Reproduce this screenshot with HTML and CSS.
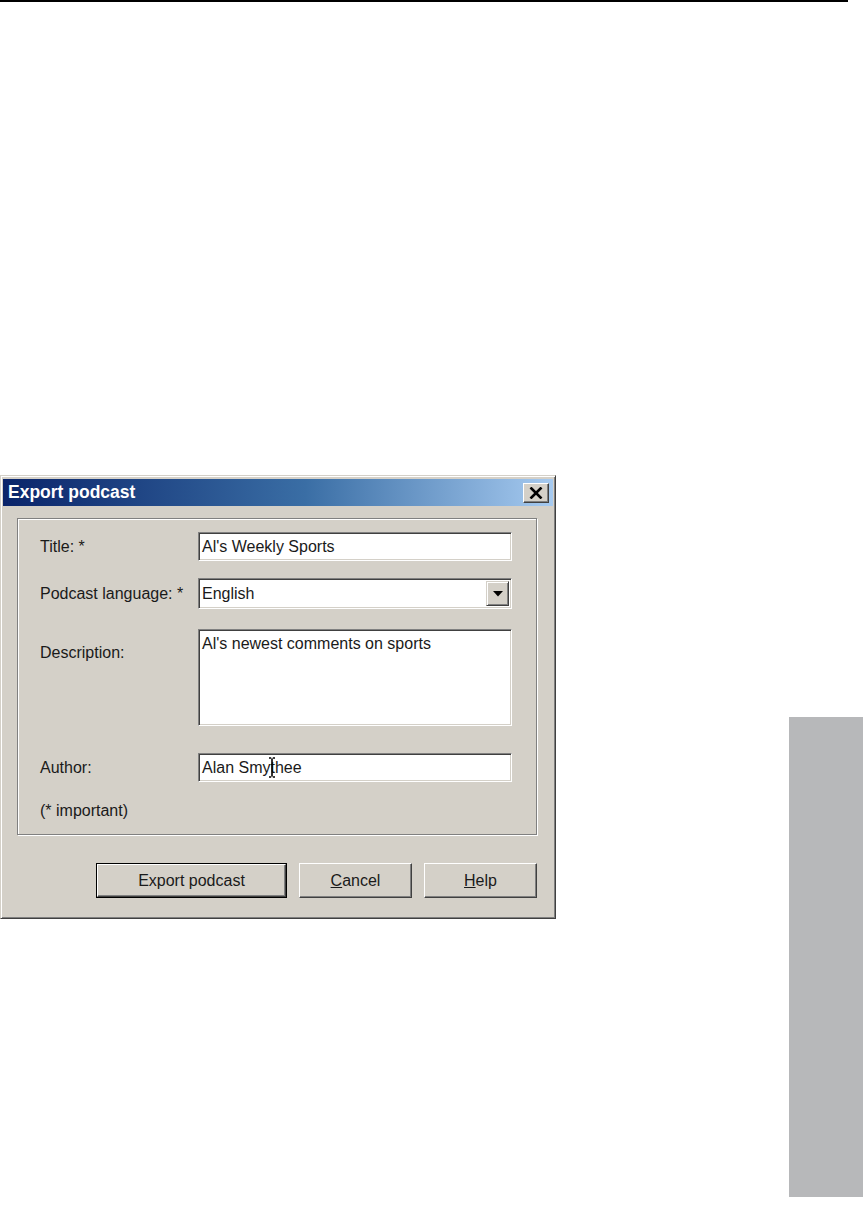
FILE: index.html
```html
<!DOCTYPE html>
<html lang="en">
<head>
    <meta charset="UTF-8">
    <title>Export podcast</title>
    <link rel="stylesheet" href="styles.css">
</head>
<body>
    <div class="rule"></div>

    <div class="page">
        <div class="main">
            <div class="dialog">
                <div class="titlebar">
                    <span class="title">Export podcast</span>
                    <span class="close-btn">
                        <svg width="14" height="12" viewBox="0 0 14 12">
                            <path d="M1.5 0.5 L12.5 11.5 M12.5 0.5 L1.5 11.5" stroke="#000" stroke-width="2.6"/>
                        </svg>
                    </span>
                </div>

                <div class="dialog-body">
                    <div class="group">
                        <div class="row row-title">
                            <span class="label">Title: *</span>
                            <div class="field">Al's Weekly Sports</div>
                        </div>

                        <div class="row row-lang">
                            <span class="label">Podcast language: *</span>
                            <div class="field select">
                                <span class="select-value">English</span>
                                <span class="drop-btn">
                                    <svg width="10" height="6" viewBox="0 0 10 6">
                                        <path d="M0 0 H10 L5 5.5 Z" fill="#000"/>
                                    </svg>
                                </span>
                            </div>
                        </div>

                        <div class="row row-desc">
                            <span class="label">Description:</span>
                            <div class="field textarea">Al's newest comments on sports</div>
                        </div>

                        <div class="row row-author">
                            <span class="label">Author:</span>
                            <div class="field">Alan Smy<span class="ibeam"><svg width="6" height="21" viewBox="0 0 6 21"><path d="M0 1 H2.2 M3.8 1 H6 M3 1.5 V19.5 M0 20 H2.2 M3.8 20 H6" stroke="#000" stroke-width="1.6"/></svg></span>thee</div>
                        </div>

                        <div class="note">(* important)</div>
                    </div>

                    <div class="buttons">
                        <div class="default-ring"><button class="btn btn-wide">Export podcast</button></div>
                        <button class="btn"><u>C</u>ancel</button>
                        <button class="btn"><u>H</u>elp</button>
                    </div>
                </div>
            </div>
        </div>

        <div class="side-tab"></div>
    </div>
</body>
</html>
```

FILE: styles.css
```css
body {
    margin: 0;
    background-color: #fff;
    font-family: "Liberation Sans", Arial, sans-serif;
    color: #1a1a1a;
}

.rule {
    width: 848px;
    height: 2px;
    background-color: #000;
}

.page {
    display: flex;
    align-items: flex-start;
}

.main {
    flex: 1;
}

.side-tab {
    flex: none;
    width: 74px;
    height: 480px;
    margin-top: 715px;
    background-color: #b7b8ba;
}

/* Dialog window */
.dialog {
    box-sizing: border-box;
    width: 556px;
    height: 444px;
    margin-top: 473px;
    padding: 3px 2px;
    background-color: #d4d0c8;
    border: 1px solid;
    border-color: #d4d0c8 #404040 #404040 #d4d0c8;
    box-shadow: inset 1px 1px 0 #fff, inset -1px -1px 0 #808080;
}

.titlebar {
    display: flex;
    align-items: center;
    justify-content: space-between;
    height: 27px;
    padding: 0 4px 0 5px;
    background: linear-gradient(to right, #0a246a 0%, #3a6ea5 55%, #a6caf0 100%);
}

.title {
    color: #fff;
    font-weight: bold;
    font-size: 17.5px;
}

.close-btn {
    box-sizing: border-box;
    display: flex;
    align-items: center;
    justify-content: center;
    width: 26px;
    height: 20px;
    background-color: #d4d0c8;
    border: 1px solid;
    border-color: #fff #404040 #404040 #fff;
    box-shadow: inset -1px -1px 0 #808080;
}

.dialog-body {
    padding: 12px 0 0 14px;
}

/* Etched group box */
.group {
    box-sizing: border-box;
    width: 520px;
    height: 317px;
    padding: 13px 0 0 22px;
    border: 1px solid #808080;
    box-shadow: 1px 1px 0 #fff, inset 1px 1px 0 #fff;
    font-size: 16px;
}

.row {
    display: flex;
    align-items: center;
}

.label {
    width: 158px;
    flex: none;
}

.row-lang {
    margin-top: 17px;
}

.row-desc {
    margin-top: 20px;
    align-items: flex-start;
}

.row-desc .label {
    padding-top: 15px;
}

.row-author {
    margin-top: 27px;
}

.note {
    margin-top: 20px;
}

/* Sunken fields */
.field {
    box-sizing: border-box;
    position: relative;
    width: 314px;
    height: 29px;
    padding: 0 3px;
    display: flex;
    align-items: center;
    background-color: #fff;
    border: 1px solid;
    border-color: #808080 #fff #fff #808080;
    box-shadow: inset 1px 1px 0 #404040, inset -1px -1px 0 #d4d0c8;
    white-space: pre;
}

.select {
    height: 31px;
    padding-right: 2px;
    justify-content: space-between;
}

.drop-btn {
    box-sizing: border-box;
    display: flex;
    align-items: center;
    justify-content: center;
    width: 23px;
    height: 25px;
    background-color: #d4d0c8;
    border: 1px solid;
    border-color: #d4d0c8 #404040 #404040 #d4d0c8;
    box-shadow: inset 1px 1px 0 #fff, inset -1px -1px 0 #808080;
}

.textarea {
    height: 97px;
    align-items: flex-start;
    padding-top: 5px;
}

.ibeam {
    position: relative;
    display: inline-block;
    width: 0;
    height: 18px;
}

.ibeam svg {
    position: absolute;
    left: -1px;
    top: -2px;
}

/* Buttons */
.buttons {
    display: flex;
    justify-content: flex-end;
    align-items: center;
    gap: 12px;
    width: 520px;
    margin-top: 28px;
}

.default-ring {
    border: 1px solid #000;
    display: flex;
}

.btn {
    box-sizing: border-box;
    width: 113px;
    height: 35px;
    margin: 0;
    padding: 0;
    font-family: "Liberation Sans", Arial, sans-serif;
    font-size: 16px;
    color: #1a1a1a;
    background-color: #d4d0c8;
    border: 1px solid;
    border-color: #fff #404040 #404040 #fff;
    box-shadow: inset -1px -1px 0 #808080, inset 1px 1px 0 #d4d0c8;
}

.btn-wide {
    width: 189px;
    height: 33px;
}
```
